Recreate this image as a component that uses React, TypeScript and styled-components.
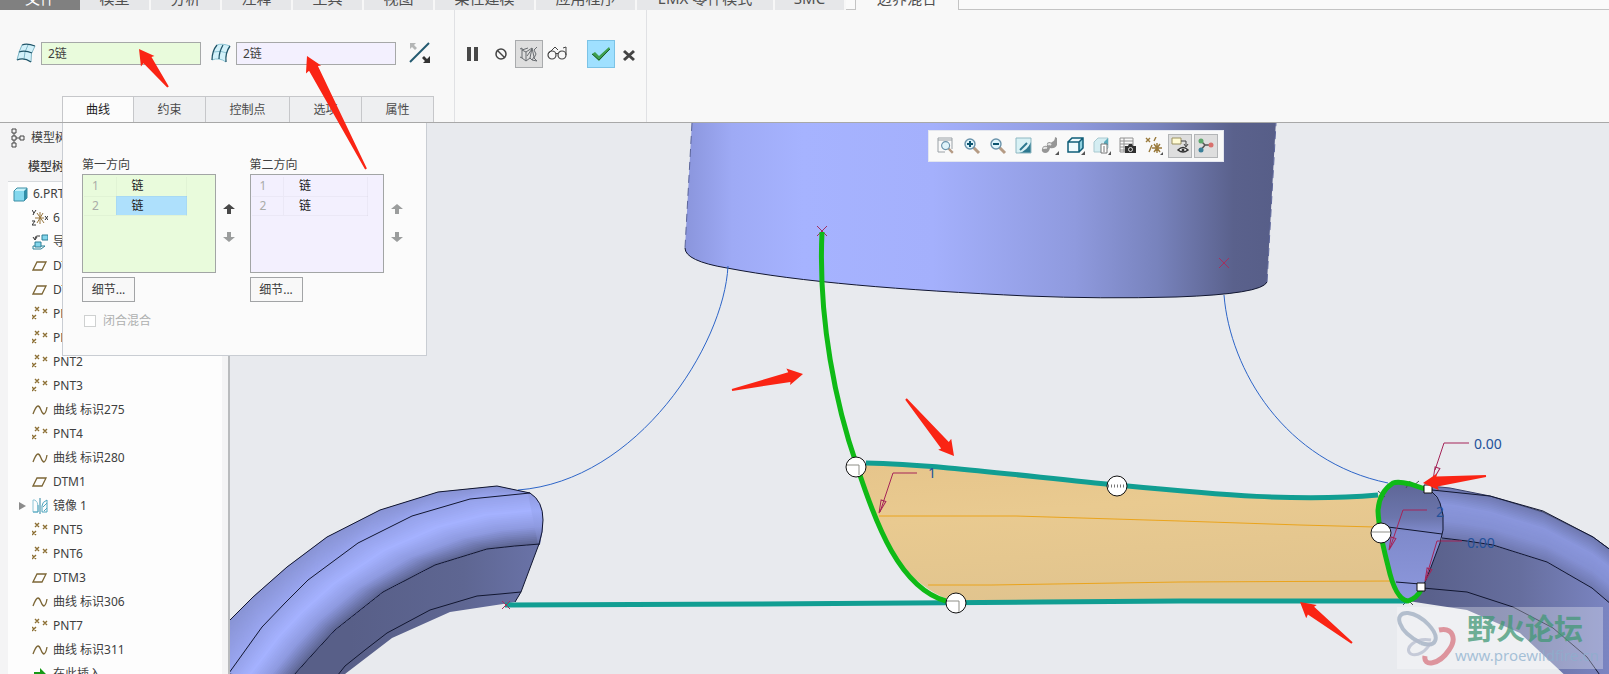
import React from "react";
import styled, { createGlobalStyle } from "styled-components";

const GlobalStyle = createGlobalStyle`
  * { box-sizing: border-box; }
  body {
    margin: 0;
    background: #e8eaee;
    color: #404040;
    font: 12px/16px "Noto Sans", "Noto Sans CJK SC", sans-serif;
  }
  button, input { font: inherit; color: inherit; }
`;

/* ---------- page frame ---------- */

const Page = styled.div`
  position: relative;
  display: flex;
  flex-direction: column;
  height: 100vh;
  overflow: hidden;
`;

const MenuStrip = styled.nav`
  display: flex;
  flex: none;
  align-items: flex-end;
  height: 10px;
  overflow: hidden;
  background: #fafafa;
`;

const MenuTab = styled.button<{ $width: number; $kind?: "file" | "active" }>`
  flex: none;
  width: ${(p) => p.$width}px;
  height: 28px;
  padding: 4px 0 0;
  border: 0;
  border-right: 2px solid #f7f7f7;
  font-size: 15px;
  line-height: 22px;
  white-space: nowrap;
  color: ${(p) => (p.$kind === "file" ? "#ffffff" : "#505050")};
  background: ${(p) => (p.$kind === "file" ? "#808080" : "#e6e7e9")};
  ${(p) => p.$kind === "file" && "border-right: 0;"}
  ${(p) =>
    p.$kind === "active" &&
    "background: #f8f8f8; border: 1px solid #c4c4c4; border-width: 0 1px;"}
`;

const StripEdge = styled.span<{ $grow?: boolean }>`
  flex: ${(p) => (p.$grow ? "1" : "0 0 9px")};
  height: 10px;
  border-bottom: 1px solid #c4c4c4;
`;

const Ribbon = styled.header`
  position: relative;
  z-index: 2;
  display: flex;
  flex: none;
  height: 113px;
  background: #f8f8f8;
  border-bottom: 1px solid #a8a8a8;
`;

const FieldSection = styled.section`
  display: flex;
  flex-direction: column;
  justify-content: space-between;
  width: 455px;
  padding-top: 29px;
  border-right: 1px solid #e0e1e4;
`;

const FieldRow = styled.div`
  display: flex;
  align-items: center;
  padding-left: 16px;
`;

const Field = styled.label`
  display: flex;
  align-items: center;
  gap: 5px;
  margin-right: 10px;
`;

const ChainInput = styled.input<{ $tone: string }>`
  width: 160px;
  height: 23px;
  padding: 0 6px;
  border: 1px solid #a6a8a8;
  outline: 0;
  background: ${(p) => p.$tone};
`;

const PlainButton = styled.button<{ $look?: "pressed" | "accept" }>`
  display: grid;
  place-items: center;
  width: 28px;
  height: 28px;
  padding: 0;
  border: 1px solid transparent;
  background: none;
  ${(p) => p.$look === "pressed" && "background: #dedede; border-color: #a9abad;"}
  ${(p) => p.$look === "accept" && "background: #9fe0ff; border-color: #7cc3e6;"}
`;

const ControlSection = styled.section`
  display: flex;
  align-items: flex-start;
  width: 192px;
  padding: 30px 0 0 4px;
  border-right: 1px solid #e0e1e4;
`;

const AcceptGroup = styled.div`
  display: flex;
  margin-left: 16px;
`;

const PanelTabs = styled.div`
  display: flex;
  margin-left: 62px;
`;

const PanelTab = styled.button<{ $wide?: boolean; $active?: boolean }>`
  width: ${(p) => (p.$wide ? 84 : 72)}px;
  height: 26px;
  padding: 0;
  border: 1px solid #c6c7ca;
  border-left-width: ${(p) => (p.$active ? 1 : 0)}px;
  border-bottom: 0;
  background: ${(p) => (p.$active ? "#fcfcfc" : "#eeeff1")};
  color: ${(p) => (p.$active ? "#1c1c1c" : "#4a4a4a")};
`;

/* ---------- curve panel ---------- */

const CurvePanel = styled.section`
  position: absolute;
  top: 113px;
  left: 62px;
  width: 365px;
  height: 233px;
  padding: 34px 19px 0;
  border: 1px solid #c9cdd3;
  border-top: 0;
  background: #fbfbfb;
`;

const Directions = styled.div`
  display: flex;
  gap: 10px;
`;

const Direction = styled.div`
  display: flex;
  flex-direction: column;
  align-items: flex-start;
  width: 158px;
`;

const ListRow = styled.div`
  display: flex;
  gap: 3px;
  align-items: center;
  margin: 1px 0 4px;
`;

const ChainBox = styled.div<{ $tone: string }>`
  width: 134px;
  height: 99px;
  padding: 2px 1px;
  border: 1px solid #a2a5a5;
  background: ${(p) => p.$tone};
`;

const ChainTable = styled.table<{ $wide: boolean }>`
  border-collapse: collapse;
  table-layout: fixed;
  width: ${(p) => (p.$wide ? 116 : 103)}px;
`;

const NumberCell = styled.th`
  width: 32px;
  height: 19px;
  padding: 0 0 0 8px;
  border-bottom: 1px solid #00000008;
  font-weight: 400;
  text-align: left;
  color: #a9aca8;
`;

const NameCell = styled.td<{ $selected: boolean }>`
  padding: 0 0 0 15px;
  border: 1px solid #00000008;
  border-top: 0;
  color: #222222;
  background: ${(p) => (p.$selected ? "#aee0fc" : "transparent")};
`;

const MoveButtons = styled.div`
  display: flex;
  flex-direction: column;
  gap: 14px;
  padding: 0 3px 2px;
`;

const MoveButton = styled.button`
  width: 14px;
  height: 14px;
  padding: 0;
  border: 0;
  background: none;
  line-height: 0;
`;

const DetailButton = styled.button`
  width: 53px;
  height: 25px;
  padding: 0;
  border: 1px solid #a2a4a6;
  background: #f8f8f8;
`;

const CloseOption = styled.label`
  display: flex;
  align-items: center;
  gap: 7px;
  margin: 11px 0 0 2px;
  color: #aeb0b0;
`;

const CheckBox = styled.input`
  appearance: none;
  width: 12px;
  height: 12px;
  margin: 0;
  border: 1px solid #cfd1d1;
  background: #ffffff;
`;

/* ---------- workspace ---------- */

const Workspace = styled.div`
  display: flex;
  flex: 1;
  min-height: 0;
`;

const Sidebar = styled.aside`
  flex: none;
  width: 230px;
  padding-left: 8px;
  border-right: 2px solid #b9bbbd;
  overflow: hidden;
  background: #f4f4f5;
`;

const TreeTitle = styled.div`
  display: flex;
  align-items: center;
  gap: 6px;
  height: 29px;
  padding-left: 3px;
`;

const TreeHeading = styled.h2`
  height: 29px;
  margin: 0;
  padding-left: 20px;
  font-size: 12px;
  font-weight: 500;
  line-height: 29px;
`;

const Tree = styled.ul`
  width: 214px;
  margin: 0;
  padding: 0;
  list-style: none;
  border-top: 1px solid #d6d9dc;
  background: #fdfdfd;
`;

const TreeItem = styled.li<{ $root?: boolean }>`
  display: flex;
  align-items: center;
  gap: 5px;
  height: 24px;
  padding-left: ${(p) => (p.$root ? 4 : 8)}px;
  white-space: nowrap;
`;

const Expander = styled.span`
  display: grid;
  place-items: center;
  width: 11px;
  height: 16px;
`;

const Viewport = styled.main`
  position: relative;
  flex: 1;
  min-width: 0;
  background: #e8eaee;
`;

const Scene = styled.svg`
  display: block;
  width: 100%;
  height: 100%;
`;

const ViewTools = styled.div`
  position: absolute;
  top: 7px;
  left: 698px;
  display: flex;
  align-items: center;
  gap: 2px;
  height: 32px;
  padding: 0 5px;
  border: 1px solid #e3e6ef;
  background: #f9f9f9;
`;

const ToolButton = styled.button<{ $on?: boolean }>`
  display: grid;
  place-items: center;
  width: 24px;
  height: 24px;
  padding: 0;
  border: 1px solid ${(p) => (p.$on ? "#b3b5b7" : "transparent")};
  background: ${(p) => (p.$on ? "#dedede" : "none")};
`;

const Watermark = styled.div`
  position: absolute;
  right: 6px;
  bottom: 5px;
  display: flex;
  width: 206px;
  height: 62px;
  background: rgba(255, 255, 255, 0.3);
`;

const WatermarkText = styled.div`
  display: flex;
  flex-direction: column;
  gap: 4px;
  padding-top: 4px;
  white-space: nowrap;
`;

const ForumName = styled.strong`
  padding-left: 10px;
  font: 700 29px/32px "Noto Sans CJK SC", sans-serif;
  color: rgba(66, 152, 118, 0.75);
`;

const ForumUrl = styled.span`
  margin-left: -2px;
  font-size: 15px;
  line-height: 16px;
  color: rgba(140, 175, 205, 0.75);
`;

const Annotations = styled.svg`
  position: absolute;
  z-index: 3;
  top: 0;
  left: 0;
  width: 440px;
  height: 180px;
  pointer-events: none;
`;

/* ---------- icons ---------- */

const Icon = ({ w = 16, h = w, children }: { w?: number; h?: number; children: React.ReactNode }) => (
  <svg width={w} height={h} viewBox={`0 0 ${w} ${h}`} fill="none" aria-hidden="true">
    {children}
  </svg>
);

const FirstDirectionIcon = () => (
  <Icon w={20}>
    <path d="M6 2Q11 0 19 3Q14 10 15 19Q8 14 1 17Q2 8 6 2Z" fill="#d2f1fa" />
    <path d="M6 2Q3 8 1 17M12 2Q8 9 8 16M19 3Q14 10 15 19" stroke="#7fb6c6" />
    <path d="M6 2Q11 0 19 3M3 9Q9 7 16 10M1 17Q8 14 15 19" stroke="#1f5468" strokeWidth="1.3" />
  </Icon>
);

const SecondDirectionIcon = () => (
  <Icon w={20}>
    <path d="M6 2Q11 0 19 3Q14 10 15 19Q8 14 1 17Q2 8 6 2Z" fill="#d2f1fa" />
    <path d="M6 2Q11 0 19 3M3 9Q9 7 16 10M1 17Q8 14 15 19" stroke="#8cc4d4" />
    <path d="M6 2Q1 8 1 17M12 2Q8 9 8 16M19 3Q14 10 15 19" stroke="#1f5468" strokeWidth="1.3" />
  </Icon>
);

const FlipIcon = () => (
  <Icon w={22}>
    <path d="M1 20L20 1" stroke="#235a70" strokeWidth="2" />
    <path d="M1 1H7L5 3L8 6L6 8L3 5L1 7Z" fill="#b4b6b6" />
    <path d="M21 21H14L16 19L13 16L15 14L18 17L21 14Z" fill="#333" />
  </Icon>
);

const PauseIcon = () => (
  <Icon><path d="M2 1H6V15H2ZM9 1H13V15H9Z" fill="#484848" /></Icon>
);

const ForbidIcon = () => (
  <Icon><circle cx="8" cy="8" r="5" stroke="#444" strokeWidth="1.5" /><path d="M4 4L12 12" stroke="#444" strokeWidth="1.5" /></Icon>
);

const WireIcon = () => (
  <Icon w={20}>
    <path d="M1 5L3 4V14L1 13M3 14L7 17L11 14M3 6L7 8L13 4M7 8V17M3 6L9 4M13 4L11 14L13 16L15 13L13 4M8 12L13 5M18 3L15 6L17 10L15 14L18 17M13 16L18 17" stroke="#686c70" />
  </Icon>
);

const GlassesIcon = () => (
  <Icon w={20}>
    <circle cx="5" cy="11" r="4" stroke="#444" strokeWidth="1.2" />
    <circle cx="15" cy="11" r="4" stroke="#444" strokeWidth="1.2" />
    <path d="M9 10Q10 8 11 10M1 10L8 3L11 6M19 11V3L16 4" stroke="#444" />
  </Icon>
);

const CheckIcon = () => (
  <Icon w={20}>
    <path d="M1 10L4 8L8 12L18 3L19 5L8 17Z" fill="#3d9f50" />
    <path d="M1 10L8 16L19 5" stroke="#1d5f2c" />
  </Icon>
);

const CancelIcon = () => (
  <Icon><path d="M3 5L13 14M13 5L3 14" stroke="#444" strokeWidth="3" /></Icon>
);

const MoveIcon = ({ down, color }: { down?: boolean; color: string }) => (
  <Icon w={14}>
    <path d={down ? "M7 12L1 7H5V2H9V7H13Z" : "M7 2L13 7H9V12H5V7H1Z"} fill={color} />
  </Icon>
);

const TreeIcon = () => (
  <Icon w={14} h={20}>
    <path d="M1 1H5V5H1ZM1 8H5V12H1ZM1 15H5V19H1ZM9 8H13V12H9ZM3 5V8M3 12V15M5 10H9" stroke="#444" />
  </Icon>
);

type NodeKind = "part" | "csys" | "import" | "plane" | "points" | "curve" | "mirror" | "insert";

const nodeArt: Record<NodeKind, React.ReactNode> = {
  part: (
    <>
      <path d="M2 5L5 2H15L12 5Z" fill="#c6f3fb" /><path d="M12 5L15 2V12L12 15Z" fill="#2f8fa9" />
      <path d="M2 5H12V15H2Z" fill="#84d8ee" /><path d="M2 5L5 2H15V12L12 15H2Z" stroke="#3c8ea5" />
    </>
  ),
  csys: (
    <>
      <path d="M3 8H12M8 2V14M5 13L11 3M5 3L12 13" stroke="#96753c" />
      <path d="M0 0L2 3L4 0M2 3L1 5M0 11H3L0 15H4M13 6L16 10M16 6L13 10" stroke="#333" />
    </>
  ),
  import: (
    <>
      <path d="M1 12H13L9 15H1Z" stroke="#2c8298" /><path d="M10 1H16V6H10ZM3 8H9V13H3Z" fill="#83d6ec" stroke="#2c7f96" />
      <path d="M8 2H5Q3 2 3 5M1 3L3 6L5 3" stroke="#333" />
    </>
  ),
  plane: <path d="M5 4H14L10 12H1Z" stroke="#7c6636" strokeWidth="1.3" />,
  points: <path d="M3 1L7 5M7 1L3 5M11 3L15 7M15 3L11 7M0 9L4 13M4 9L0 13" stroke="#8c6f34" strokeWidth="1.4" />,
  curve: <path d="M1 12Q4 4 6 4C9 4 9 12 12 12Q14 11 15 5" stroke="#7c6636" strokeWidth="1.3" />,
  mirror: (
    <>
      <path d="M8 0V16" stroke="#2c83a0" /><path d="M1 2H3Q6 4 6 8V14H1Z" stroke="#8fc6d7" />
      <path d="M6 7V14H1M15 2Q10 4 10 8V14H15V2M15 5L11 9M15 10L12 13" stroke="#4ca4bd" />
    </>
  ),
  insert: <path d="M2 6H8V2L14 8L8 14V10H2Z" fill="#169a16" />,
};

const lens = (sign: React.ReactNode) => (
  <>
    <path d="M10 10L16 16" stroke="#b59b85" strokeWidth="3" />
    <circle cx="7" cy="7" r="5" fill="#dff4fb" stroke="#6a93ab" strokeWidth="1.4" />
    {sign}
  </>
);

const viewArt: { label: string; on?: boolean; art: React.ReactNode }[] = [
  { label: "重新调整", art: <><path d="M1 15V1H15V12M1 15H8M1 3H15" stroke="#9aa1a6" /><g transform="translate(3 3) scale(.8)">{lens(null)}</g></> },
  { label: "放大", art: lens(<path d="M7 4V10M4 7H10" stroke="#0c5470" strokeWidth="2" />) },
  { label: "缩小", art: lens(<path d="M4 7H10" stroke="#0c5470" strokeWidth="2" />) },
  { label: "重画", art: <><path d="M1 1H16V16H1Z" fill="#d8f1f5" /><path d="M16 5V16H4Q12 14 16 5Z" fill="#2c7890" /><path d="M5 13L12 6" stroke="#2c7890" strokeWidth="2" /><path d="M1 1H16V16H1Z" stroke="#8fb8c2" /></> },
  { label: "渲染选项", art: <><path d="M1 12Q2 8 6 9Q5 5 9 5Q10 6 11 5Q14 4 14 0L16 1V8Q14 12 9 11Q8 16 4 16Q0 15 1 12Z" fill="#969696" /><path d="M3 12Q3 10 6 11M7 8Q8 6 10 8" stroke="#e4e4e4" strokeWidth="2" /><path d="M18 14V18H14Z" fill="#555" /></> },
  { label: "显示样式", art: <><path d="M1 5L5 1H16V11L12 15H1Z" fill="#effafd" /><path d="M12 5L16 1V11L12 15Z" fill="#8fd0df" /><path d="M1 5H12V15H1ZM1 5L5 1H16V11L12 15M12 5L16 1" stroke="#0f5d78" strokeWidth="1.5" /><path d="M18 14V18H14Z" fill="#555" /></> },
  { label: "已保存方向", art: <><path d="M1 5L5 1H15V11L11 15H1Z" fill="#d4edf2" stroke="#a9c9d0" /><path d="M11 5L15 1V8H11Z" fill="#59aabb" /><path d="M8 7H14V16H8Z" fill="#fff" stroke="#777" /><path d="M10 10H12M10 12H12M10 14H12" stroke="#777" /><path d="M18 14V18H15Z" fill="#555" /></> },
  { label: "视图管理器", art: <><path d="M1 1H14V15H1ZM1 4H14M1 7H14M1 10H7M1 13H7M5 1V15" stroke="#929292" /><path d="M6 9H9L10 7H13L14 9H17V16H6Z" fill="#303030" /><circle cx="11.500" cy="12.500" r="2" stroke="#ddd" /></> },
  { label: "基准显示过滤器", art: <><path d="M1 1L5 5M5 1L1 5M11 0L9 4M7 8L4 15M12 6V16M9 7L15 15M15 7L9 15M7 11H17" stroke="#9a7a3c" strokeWidth="1.4" /><path d="M18 15V18H15Z" fill="#555" /></> },
  { label: "注释显示", on: true, art: <><path d="M1 1H10V7H1Z" fill="#fffbd4" stroke="#9b9160" /><path d="M10 4H15V9M13 7L15 10L17 7" stroke="#444" /><path d="M7 13Q12 8 17 13Q12 17 7 13Z" fill="#fff" stroke="#333" strokeWidth="1.5" /><circle cx="12" cy="13" r="1.500" fill="#333" /></> },
  { label: "旋转中心", on: true, art: <><path d="M3 3L8 8L3 14M8 8H14" stroke="#555" strokeWidth="1.5" /><circle cx="4" cy="4" r="2.500" fill="#5da86c" /><circle cx="4" cy="13" r="2.500" fill="#3b7f99" /><circle cx="14" cy="8" r="2.500" fill="#d9706d" /></> },
];

/* ---------- 3D scene ---------- */

type Pt = [number, number];
const line = (pts: Pt[]) => "M" + pts.map((p) => p.join(" ")).join("L");

const mix = (a: number[], b: number[], t: number) =>
  `rgb(${a.map((v, i) => Math.round(v + (b[i] - v) * t)).join(",")})`;

/* Fills the strip between two edges with thin bands that blend through the colour stops. */
const ShadedStrip = ({ from, to, stops }: { from: Pt[]; to: Pt[]; stops: number[][] }) => {
  const steps = 28;
  return (
    <>
      {Array.from({ length: steps }, (_, i) => {
        const t = i / steps;
        const inner = from.map(([x, y], k): Pt => [x + (to[k][0] - x) * t, y + (to[k][1] - y) * t]);
        const s = (i / (steps - 1)) * (stops.length - 1);
        const n = Math.min(Math.floor(s), stops.length - 2);
        return <path key={i} d={line([...inner, ...[...to].reverse()]) + "Z"} fill={mix(stops[n], stops[n + 1], s - n)} />;
      })}
    </>
  );
};

const Arrow = ({ tail, tip }: { tail: Pt; tip: Pt }) => {
  const length = Math.hypot(tip[0] - tail[0], tip[1] - tail[1]);
  const angle = (Math.atan2(tip[1] - tail[1], tip[0] - tail[0]) * 180) / Math.PI;
  return (
    <path
      transform={`translate(${tip.join(" ")}) rotate(${angle})`}
      d={`M0 0L-15 8L-14 5L${-length} 1V-1L-14 -5L-15 -9Z`}
      fill="#fa2414"
    />
  );
};

const leftOuter: Pt[] = [[229, 621], [253, 597], [287, 567], [327, 537], [380, 510], [438, 492], [497, 486], [530, 493]];
const leftCrest: Pt[] = [[229, 673], [262, 627], [285, 603], [308, 580], [358, 543], [412, 516], [470, 499], [530, 493]];
const leftCrease: Pt[] = [[285, 685], [312, 655], [335, 630], [383, 592], [435, 565], [487, 549], [515, 546], [540, 544]];
const leftInner: Pt[] = [[330, 685], [345, 666], [365, 650], [387, 633], [430, 610], [477, 596], [500, 594], [521, 592]];

const rightOuter: Pt[] = [[1430, 486], [1450, 488], [1490, 496], [1543, 512], [1593, 537], [1612, 551]];
const rightCrease: Pt[] = [[1442, 538], [1467, 541], [1493, 545], [1547, 562], [1592, 588], [1612, 605]];
const rightInner: Pt[] = [[1423, 588], [1467, 592], [1513, 607], [1553, 628], [1587, 657], [1602, 678]];

const endCapRight = "L1432 492L1437 497L1440 503L1443 515L1443 530L1440 543L1431 567L1423 587";
const tubeRim =
  "M1428 490L1410 484Q1398 481 1393 483Q1379 492 1378 511C1379 532 1384 550 1388 566C1392 584 1398 600 1408 601Q1417 598 1421 590";

const Leader = ({ d, x, y, turn = 18 }: { d: string; x: number; y: number; turn?: number }) => (
  <g stroke="#a52458" fill="none">
    <path d={d} />
    <path transform={`translate(${x} ${y}) rotate(${turn})`} d="M0 0L-2 -13H3Z" />
  </g>
);

const Cross = ({ x, y, s = 5 }: { x: number; y: number; s?: number }) => (
  <path d={`M${x - s} ${y - s}L${x + s} ${y + s}M${x + s} ${y - s}L${x - s} ${y + s}`} stroke="#a3305f" />
);

const ModelScene = () => (
  <Scene viewBox="230 123 1379 551" preserveAspectRatio="xMinYMin slice" fill="none" role="img" aria-label="边界混合模型">
    <defs>
      <linearGradient id="drum" gradientUnits="userSpaceOnUse" x1="685" x2="1275" y1="0" y2="0">
        <stop offset="0" stopColor="#8a95dc" />
        <stop offset=".08" stopColor="#9eaaf5" />
        <stop offset=".2" stopColor="#a6b3ff" />
        <stop offset=".42" stopColor="#a4b0fc" />
        <stop offset=".66" stopColor="#8f9ade" />
        <stop offset=".8" stopColor="#7883bd" />
        <stop offset=".93" stopColor="#5a618c" />
        <stop offset="1" stopColor="#575e88" />
      </linearGradient>
      <linearGradient id="sheet" x1="0" x2=".3" y1="0" y2="1">
        <stop offset="0" stopColor="#e6c58b" />
        <stop offset=".4" stopColor="#e9ca90" />
        <stop offset="1" stopColor="#e1c48e" />
      </linearGradient>
      <linearGradient id="cap" x1="0" x2="0" y1="0" y2="1">
        <stop offset="0" stopColor="#5e6696" />
        <stop offset=".3" stopColor="#6c76ad" />
        <stop offset=".42" stopColor="#7f8acb" />
        <stop offset="1" stopColor="#8d98dd" />
      </linearGradient>
      <linearGradient id="hollow" gradientUnits="userSpaceOnUse" x1="350" x2="540" y1="0" y2="0">
        <stop offset="0" stopColor="#585f88" />
        <stop offset=".6" stopColor="#5e6692" />
        <stop offset="1" stopColor="#6a73a8" />
      </linearGradient>
      <linearGradient id="leftRim" gradientUnits="userSpaceOnUse" x1="0" x2="0" y1="493" y2="544">
        <stop offset="0" stopColor="#8f9adf" />
        <stop offset=".35" stopColor="#9dabf7" />
        <stop offset=".66" stopColor="#8e9ae0" />
        <stop offset="1" stopColor="#6b74a8" />
      </linearGradient>
      <linearGradient id="tubeSide" gradientUnits="userSpaceOnUse" x1="1430" x2="1609" y1="0" y2="0">
        <stop offset="0" stopColor="#5a618c" />
        <stop offset=".5" stopColor="#666e9e" />
        <stop offset="1" stopColor="#7b85c2" />
      </linearGradient>
    </defs>

    {/* drum */}
    <path
      d="M692 120L685 248Q685 261 727 268C800 282 900 290 1027 296Q1100 299 1176 297Q1262 294 1267 282L1276 120Z"
      fill="url(#drum)"
    />
    <path d="M685 248Q685 261 727 268C800 282 900 290 1027 296Q1100 299 1176 297Q1262 294 1267 282" stroke="#111630" />
    <path d="M692 123L685 248M1267 282L1276 123" stroke="#5c659a" strokeDasharray="8 5" />

    {/* guide curves */}
    <path d="M728 266C724 345 638 481 518 490" stroke="#2d65c8" />
    <path d="M1224 295C1230 370 1285 462 1388 483" stroke="#2d65c8" />

    {/* left tube */}
    <path d={line(leftOuter) + "L538 503L543 518L542 532L539 544L521 592L515 602L503 604L450 612L392 638L345 674H229Z"} fill="url(#hollow)" />
    <path d="M520 494H530Q543 501 543 520Q543 532 540 544H520Z" fill="url(#leftRim)" />
    <ShadedStrip from={leftOuter} to={leftCrest} stops={[[137, 148, 213], [154, 166, 240]]} />
    <ShadedStrip from={leftCrest} to={leftCrease} stops={[[150, 162, 234], [165, 178, 255], [142, 154, 224], [94, 102, 148]]} />
    <path d="M528 494L530 493Q543 501 543 520Q543 532 540 544H538Z" fill="url(#leftRim)" />
    <path d={line(leftOuter)} stroke="#111630" />
    <path d={line(leftCrest)} stroke="#111630" />
    <path d={line(leftCrease)} stroke="#111630" />
    <path d={line(leftInner)} stroke="#111630" />
    <path d="M530 493Q543 501 543 520Q543 532 539 544L521 592L515 602" stroke="#111630" />

    {/* right tube */}
    <path d={line(rightCrease) + "V680H1570L1520 633L1467 610L1408 601L1423 587Z"} fill="url(#tubeSide)" />
    <ShadedStrip
      from={rightOuter}
      to={rightCrease}
      stops={[[112, 122, 178], [138, 150, 220], [132, 144, 211], [112, 121, 176]]}
    />
    <path d={line(rightOuter)} stroke="#3a4168" />
    <path d="M1432 490L1490 496L1543 511L1593 537L1612 551" stroke="#111630" />
    <path d={line(rightCrease)} stroke="#111630" />
    <path d={line(rightInner)} stroke="#111630" />

    {/* blended sheet */}
    <path
      d="M857 464C930 463 1040 478 1117 485C1220 495 1300 502 1380 495L1378 511C1379 532 1384 550 1388 566Q1394 592 1404 600L956 602C905 587 875 535 857 466Z"
      fill="url(#sheet)"
    />
    <path d="M879 516H1016L1180 521L1300 525L1375 527M928 585H992L1180 582L1393 581" stroke="#eaa41c" />

    {/* tube end */}
    <path d={tubeRim + "L1423 587L1431 567L1440 543L1443 530V515L1440 503L1432 492Z"} fill="url(#cap)" />
    <path d={"M1428 490" + endCapRight} stroke="#111630" />
    <path d="M1388 527L1442 534M1396 582L1420 584" stroke="#111630" />
    <path d="M1378 491L1385 497M1406 488L1410 481M1413 486L1419 481M1403 605L1408 600L1413 605" stroke="#444c55" />

    {/* selected chains */}
    <Cross x={822} y={231} />
    <g strokeWidth="5">
      <path d="M866 463C935 464 1040 478 1117 485C1220 495 1300 502 1378 495" stroke="#119e92" />
      <path d="M505 605L760 604L1042 602L1180 601H1407" stroke="#119e92" />
      <path d="M822 232C818 320 836 406 857 466C876 525 900 588 946 601" stroke="#0fba16" />
      <path d={tubeRim} stroke="#0fba16" />
    </g>
    <Cross x={1224} y={263} />
    <Cross x={506} y={605} s={4} />

    {/* drag handles */}
    <g fill="#ffffff" stroke="#111111">
      <circle cx="856" cy="467" r="10" />
      <circle cx="956" cy="603" r="10" />
      <circle cx="1117" cy="486" r="10" />
      <circle cx="1381" cy="533" r="10" />
      <path d="M1424 485H1432V493H1424ZM1417 583H1425V591H1417Z" />
    </g>
    <path d="M847 465H859V475M947 601H959V612M1372 532H1390" stroke="#8f8f88" />
    <path d="M1108 486H1126" stroke="#777777" strokeWidth="3" strokeDasharray="1 2" />

    {/* leaders and dimensions */}
    <Leader d="M917 473H893L880 512" x={879} y={513} />
    <Leader d="M1469 443H1444L1435 470" x={1433} y={480} />
    <Leader d="M1427 510H1403L1390 548" x={1389} y={550} />
    <Leader d="M1462 541H1437L1426 578" x={1425} y={581} />
    <g fill="#23519a" fontSize="14">
      <text x="928" y="478">1</text>
      <text x="1436" y="517">2</text>
      <text x="1474" y="449">0.00</text>
      <text x="1467" y="548">0.00</text>
    </g>

    <Arrow tail={[732, 390]} tip={[803, 374]} />
    <Arrow tail={[906, 399]} tip={[954, 456]} />
    <Arrow tail={[1352, 643]} tip={[1300, 602]} />
    <Arrow tail={[1486, 476]} tip={[1423, 483]} />
  </Scene>
);

/* ---------- data ---------- */

const menu: { text: string; width: number }[] = [
  { text: "模型", width: 71 }, { text: "分析", width: 71 }, { text: "注释", width: 71 },
  { text: "工具", width: 71 }, { text: "视图", width: 71 }, { text: "柔性建模", width: 101 },
  { text: "应用程序", width: 101 }, { text: "EMX 零件模式", width: 138 }, { text: "SMC", width: 71 },
];

const nodes: [NodeKind, string][] = [
  ["csys", "6"], ["import", "导入特征"], ["plane", "DTM2"], ["plane", "DTM4"],
  ["points", "PNT0"], ["points", "PNT1"], ["points", "PNT2"], ["points", "PNT3"],
  ["curve", "曲线 标识275"], ["points", "PNT4"], ["curve", "曲线 标识280"], ["plane", "DTM1"],
  ["mirror", "镜像 1"], ["points", "PNT5"], ["points", "PNT6"], ["plane", "DTM3"],
  ["curve", "曲线 标识306"], ["points", "PNT7"], ["curve", "曲线 标识311"], ["insert", "在此插入"],
];

const GREEN = "#e9fbdc";
const LILAC = "#f3f0fe";

const ChainList = ({ title, tone, selected }: { title: string; tone: string; selected?: number }) => (
  <Direction>
    <span>{title}</span>
    <ListRow>
      <ChainBox $tone={tone}>
        <ChainTable aria-label={title} $wide={!selected}>
          <tbody>
            {[1, 2].map((n) => (
              <tr key={n}>
                <NumberCell scope="row">{n}</NumberCell>
                <NameCell $selected={n === selected}>链</NameCell>
              </tr>
            ))}
          </tbody>
        </ChainTable>
      </ChainBox>
      <MoveButtons>
        <MoveButton aria-label="上移"><MoveIcon color={selected ? "#484848" : "#9b9d9d"} /></MoveButton>
        <MoveButton aria-label="下移"><MoveIcon down color="#9b9d9d" /></MoveButton>
      </MoveButtons>
    </ListRow>
    <DetailButton>细节...</DetailButton>
  </Direction>
);

export default function App() {
  return (
    <Page>
      <GlobalStyle />
      <MenuStrip>
        <MenuTab $width={80} $kind="file">文件</MenuTab>
        {menu.map((m) => <MenuTab key={m.text} $width={m.width}>{m.text}</MenuTab>)}
        <StripEdge />
        <MenuTab $width={104} $kind="active">边界混合</MenuTab>
        <StripEdge $grow />
      </MenuStrip>

      <Ribbon>
        <FieldSection>
          <FieldRow>
            <Field><FirstDirectionIcon /><ChainInput $tone={GREEN} aria-label="第一方向链" defaultValue="2链" /></Field>
            <Field><SecondDirectionIcon /><ChainInput $tone={LILAC} aria-label="第二方向链" defaultValue="2链" /></Field>
            <PlainButton aria-label="反向"><FlipIcon /></PlainButton>
          </FieldRow>
          <PanelTabs>
            <PanelTab $active>曲线</PanelTab>
            <PanelTab>约束</PanelTab>
            <PanelTab $wide>控制点</PanelTab>
            <PanelTab>选项</PanelTab>
            <PanelTab>属性</PanelTab>
          </PanelTabs>
        </FieldSection>
        <ControlSection>
          <PlainButton aria-label="暂停"><PauseIcon /></PlainButton>
          <PlainButton aria-label="无预览"><ForbidIcon /></PlainButton>
          <PlainButton aria-label="分离预览" $look="pressed"><WireIcon /></PlainButton>
          <PlainButton aria-label="特征预览"><GlassesIcon /></PlainButton>
          <AcceptGroup>
            <PlainButton aria-label="确定" $look="accept"><CheckIcon /></PlainButton>
            <PlainButton aria-label="取消"><CancelIcon /></PlainButton>
          </AcceptGroup>
        </ControlSection>

        <CurvePanel>
          <Directions>
            <ChainList title="第一方向" tone={GREEN} selected={2} />
            <ChainList title="第二方向" tone={LILAC} />
          </Directions>
          <CloseOption><CheckBox type="checkbox" disabled />闭合混合</CloseOption>
        </CurvePanel>
      </Ribbon>

      <Workspace>
        <Sidebar>
          <TreeTitle><TreeIcon />模型树</TreeTitle>
          <TreeHeading>模型树</TreeHeading>
          <Tree>
            <TreeItem $root><Icon>{nodeArt.part}</Icon>6.PRT</TreeItem>
            {nodes.map(([kind, text]) => (
              <TreeItem key={text}>
                <Expander>
                  {kind === "mirror" && <Icon w={8} h={10}><path d="M1 1L8 5L1 9Z" fill="#8b8b8b" /></Icon>}
                </Expander>
                <Icon>{nodeArt[kind]}</Icon>
                {text}
              </TreeItem>
            ))}
          </Tree>
        </Sidebar>
        <Viewport>
          <ModelScene />
          <ViewTools role="toolbar">
            {viewArt.map((v) => (
              <ToolButton key={v.label} aria-label={v.label} $on={v.on}><Icon w={18}>{v.art}</Icon></ToolButton>
            ))}
          </ViewTools>
          <Watermark>
            <Icon w={60} h={62}>
              <path d="M24 36C0 24 -4 5 11 6C26 8 42 26 38 34C36 39 30 38 24 36" stroke="#9faec0" strokeWidth="4" strokeOpacity=".75" />
              <path d="M34 33C18 30 6 42 14 47C20 50 30 44 33 36" stroke="#b4b9cc" strokeWidth="3" strokeOpacity=".7" />
              <path d="M42 23C56 20 60 32 52 43C42 58 26 60 28 49" stroke="#d2626e" strokeWidth="5" strokeOpacity=".65" />
            </Icon>
            <WatermarkText>
              <ForumName>野火论坛</ForumName>
              <ForumUrl>www.proewildfire.cn</ForumUrl>
            </WatermarkText>
          </Watermark>
        </Viewport>
      </Workspace>

      <Annotations>
        <Arrow tail={[168, 87]} tip={[139, 49]} />
        <Arrow tail={[366, 169]} tip={[307, 56]} />
      </Annotations>
    </Page>
  );
}
